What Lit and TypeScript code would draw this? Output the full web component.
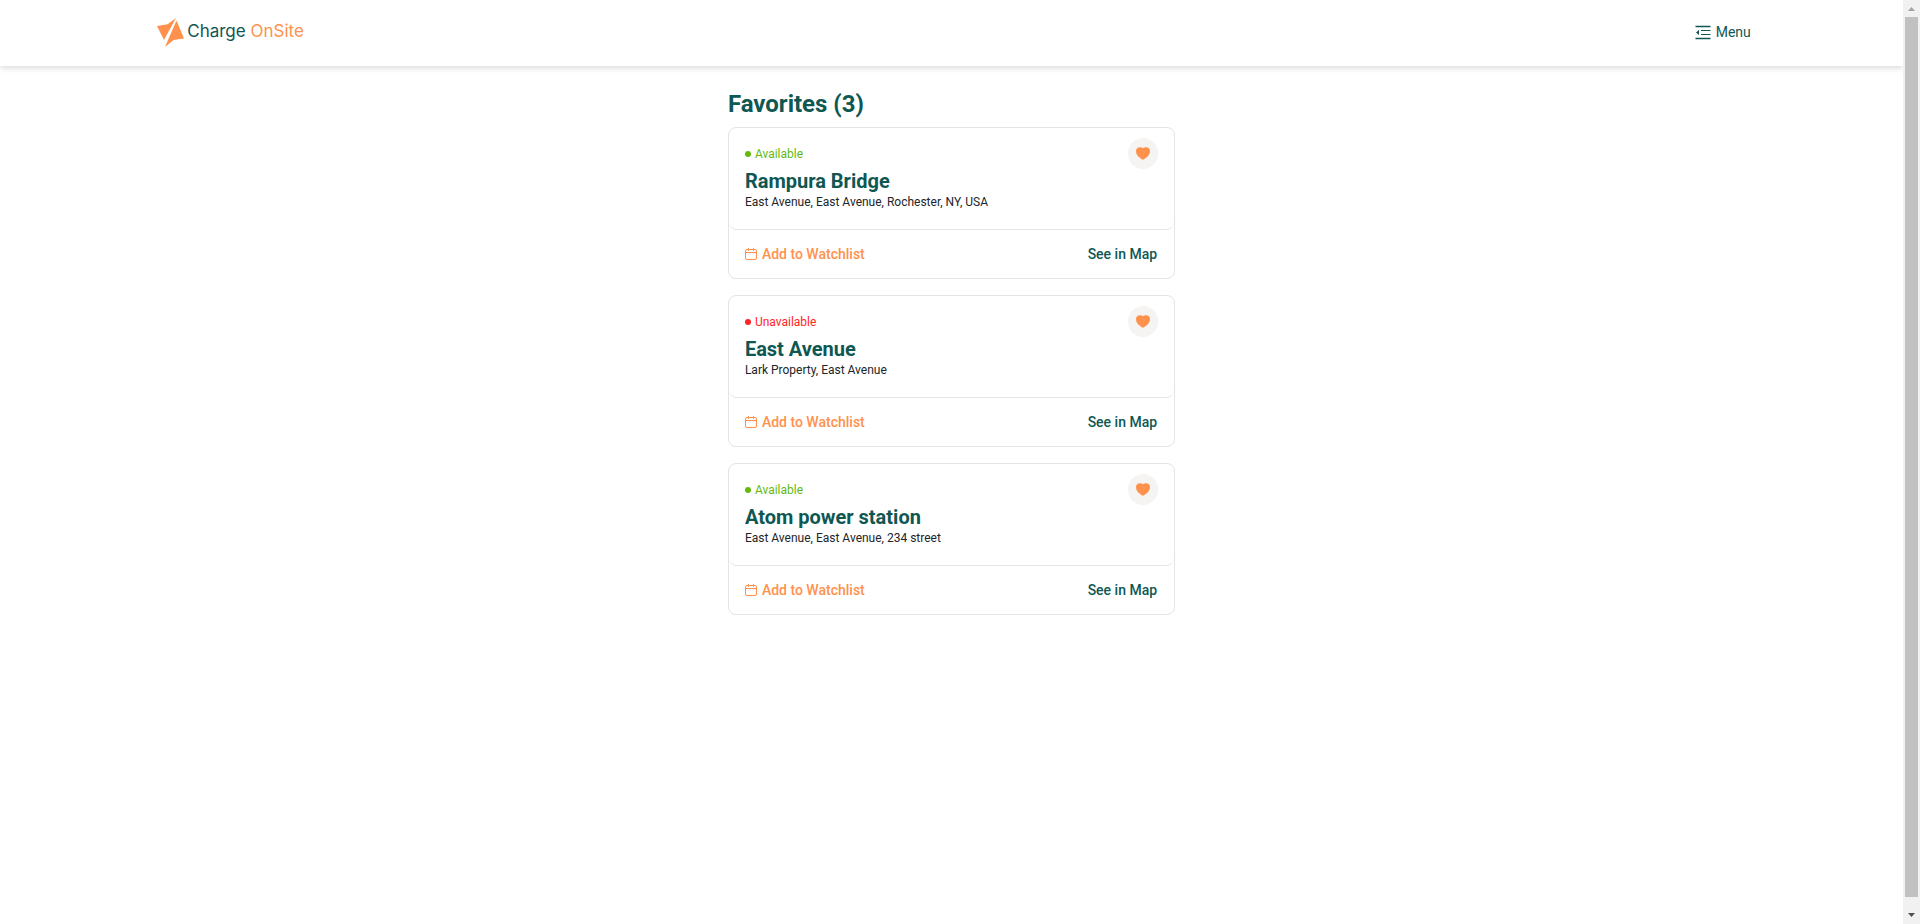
import { LitElement, html, css, svg } from "lit";
import { customElement, property, state } from "lit/decorators.js";
import { classMap } from "lit/directives/class-map.js";

interface Station {
  name: string;
  address: string;
  available: boolean;
}

const logoMark = svg`
  <path d="M0 9 L10.5 7.2 L19 1 L7 23 Z"></path>
  <path d="M19.5 3.5 L27 21.5 L16.5 23 L8 30 Z"></path>
`;

@customElement("station-card")
export class StationCard extends LitElement {
  @property({ attribute: false }) station!: Station;

  static styles = css`
    :host {
      display: block;
    }
    .card {
      border: 1px solid #e4e4e4;
      border-radius: 8px;
      background: #fff;
    }
    .info {
      display: flex;
      justify-content: space-between;
      align-items: flex-start;
      padding: 10px 16px 18px;
      border-bottom: 1px solid #e4e4e4;
      border-radius: 8px;
    }
    .details {
      padding-top: 6px;
    }
    .status {
      display: flex;
      align-items: center;
      gap: 4px;
      margin: 0 0 5px;
      font-size: 12px;
      line-height: 20px;
      color: #ff2323;
    }
    .dot {
      width: 6px;
      height: 6px;
      border-radius: 50%;
      background: currentColor;
    }
    .status.available {
      color: #65b90d;
    }
    .name {
      margin: 0;
      font-size: 20px;
      font-weight: 700;
      line-height: 24px;
      color: #0f5753;
    }
    .address {
      margin: 0;
      font-size: 12px;
      line-height: 18px;
      color: #212529;
    }
    button {
      display: flex;
      align-items: center;
      border: 0;
      padding: 0;
      background: none;
      font: inherit;
      color: inherit;
      cursor: pointer;
    }
    .heart {
      justify-content: center;
      width: 30px;
      height: 31px;
      border-radius: 50%;
      background: #f6f3f3;
      color: #ff914d;
    }
    .actions {
      display: flex;
      justify-content: space-between;
      align-items: center;
      padding: 12px 17px 12px 16px;
      font-size: 14px;
      font-weight: 500;
      line-height: 24px;
    }
    .watch {
      gap: 5px;
      color: #ff914d;
    }
    .map {
      color: #0f5753;
      text-decoration: none;
    }
  `;

  render() {
    const { name, address, available } = this.station;
    return html`
      <article class="card">
        <div class="info">
          <div class="details">
            <p class="status ${classMap({ available })}">
              <span class="dot"></span>${available ? "Available" : "Unavailable"}
            </p>
            <h2 class="name">${name}</h2>
            <p class="address">${address}</p>
          </div>
          <button class="heart" type="button" aria-label="Remove from favorites">
            <svg width="14" height="13" viewBox="0 0 14 13" fill="currentColor" aria-hidden="true">
              <path d="M7 1.3 C8 0.5 9.2 0.3 10.3 0.3 C12.4 0.3 14 1.9 14 4.2 C14 6.8 12.6 8.6 11 10 L8.2 12.2 C7.4 12.8 6.6 12.8 5.8 12.2 L3 10 C1.4 8.6 0 6.8 0 4.2 C0 1.9 1.6 0.3 3.7 0.3 C4.8 0.3 6 0.5 7 1.3 Z"></path>
            </svg>
          </button>
        </div>
        <div class="actions">
          <button class="watch" type="button">
            <svg width="12" height="12" viewBox="0 0 12 12" fill="none" stroke="currentColor" stroke-linecap="round" aria-hidden="true">
              <rect x="0.5" y="1.5" width="11" height="10" rx="1.5"></rect>
              <path d="M0.5 4.5 H11.5 M3.5 0.5 V2.5 M8.5 0.5 V2.5"></path>
            </svg>
            Add to Watchlist
          </button>
          <a class="map" href="#map">See in Map</a>
        </div>
      </article>
    `;
  }
}

@customElement("app-root")
export class AppRoot extends LitElement {
  @state() private stations: Station[] = [
    { name: "Rampura Bridge", address: "East Avenue, East Avenue, Rochester, NY, USA", available: true },
    { name: "East Avenue", address: "Lark Property, East Avenue", available: false },
    { name: "Atom power station", address: "East Avenue, East Avenue, 234 street", available: true },
  ];

  static styles = css`
    :host {
      display: grid;
      grid-template-columns: 1fr 17px;
      height: 100vh;
      background: #fff;
      font-family: Roboto, sans-serif;
      color: #0f5753;
    }
    .page {
      overflow: hidden;
    }
    .header {
      display: flex;
      justify-content: space-between;
      align-items: center;
      padding: 17px 8% 19px;
      box-shadow: 0 2px 6px rgba(0, 0, 0, 0.15);
    }
    .brand {
      display: flex;
      align-items: flex-start;
      gap: 3px;
      padding-left: 5px;
      font-family: Inter, sans-serif;
      font-size: 17px;
      font-weight: 400;
      line-height: 28px;
      color: #0f5753;
      text-decoration: none;
    }
    .mark {
      fill: #ff914d;
    }
    .site {
      color: #ff914d;
    }
    .menu {
      display: flex;
      align-items: center;
      gap: 5px;
      border: 0;
      padding: 0;
      background: none;
      font-family: inherit;
      font-size: 14px;
      line-height: 20px;
      color: #0f5753;
      cursor: pointer;
    }
    .content {
      display: flex;
      flex-direction: column;
      gap: 16px;
      width: 23.5%;
      margin: 0 auto;
      padding-top: 23px;
    }
    .title {
      margin: 0 0 -8px;
      font-size: 24px;
      font-weight: 700;
      line-height: 30px;
    }
    .scrollbar {
      display: flex;
      flex-direction: column;
      align-items: center;
      background: #f1f1f1;
    }
    .arrow {
      flex: none;
      fill: #a3a3a3;
    }
    .arrow.down {
      fill: #505050;
    }
    .track {
      flex: 1;
      width: 13px;
      padding-bottom: 10px;
    }
    .thumb {
      height: 100%;
      background: #c1c1c1;
    }
  `;

  render() {
    return html`
      <div class="page">
        <header class="header">
          <a class="brand" href="#home">
            <svg class="mark" width="27" height="30" viewBox="0 0 27 30" aria-hidden="true">${logoMark}</svg>
            <span>Charge <span class="site">OnSite</span></span>
          </a>
          <button class="menu" type="button">
            <svg width="16" height="16" viewBox="0 0 16 16" fill="none" stroke="currentColor" aria-hidden="true">
              <path d="M0.5 2.5 H15.5 M0.5 14.5 H15.5" stroke-width="1.3"></path>
              <path d="M6 6.5 H15.5 M6 10.5 H15.5"></path>
              <path d="M1 8.5 L4 6 V11 Z" fill="currentColor" stroke="none"></path>
            </svg>
            Menu
          </button>
        </header>
        <main class="content">
          <h1 class="title">Favorites (${this.stations.length})</h1>
          ${this.stations.map((s) => html`<station-card .station=${s}></station-card>`)}
        </main>
      </div>
      <div class="scrollbar" aria-hidden="true">
        <svg class="arrow" width="17" height="17" viewBox="0 0 17 17"><path d="M5 11 L8.5 7 L12 11 Z"></path></svg>
        <div class="track"><div class="thumb"></div></div>
        <svg class="arrow down" width="17" height="17" viewBox="0 0 17 17"><path d="M5 6 L8.5 10 L12 6 Z"></path></svg>
      </div>
    `;
  }
}
